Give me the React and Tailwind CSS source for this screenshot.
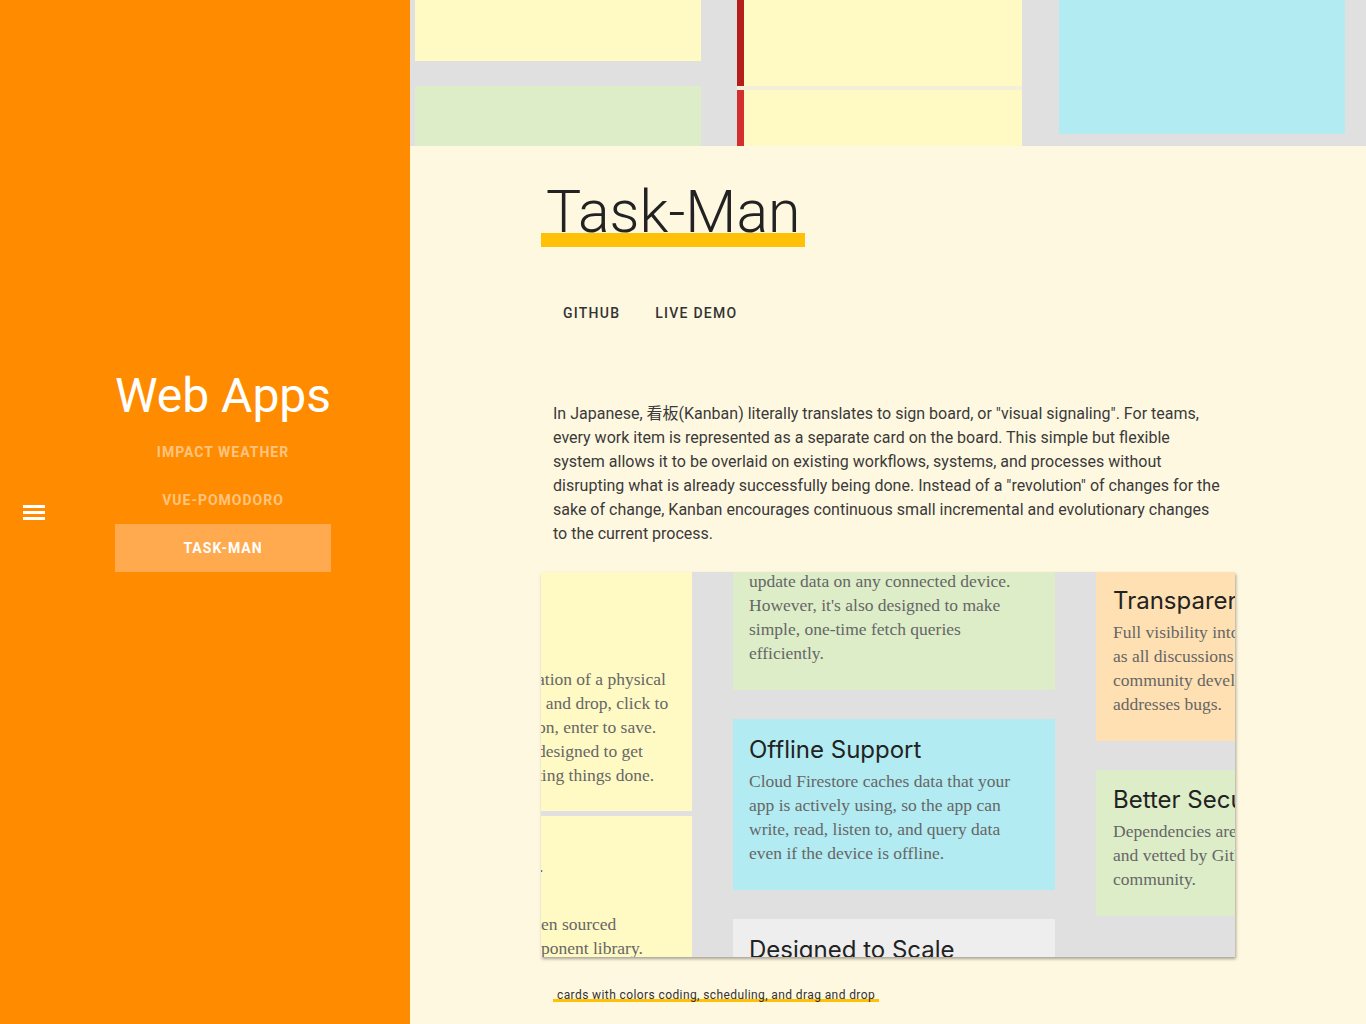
import React from "react";

const roboto = "font-['Roboto','Liberation_Sans',sans-serif]";
const serif = "font-['Liberation_Serif','DejaVu_Serif',serif]";
const franklin = "font-['Inter','Noto_Sans',sans-serif]";

function Sidebar() {
  const links = ["IMPACT WEATHER", "VUE-POMODORO", "TASK-MAN"];
  return (
    <aside className={`w-[410px] shrink-0 bg-[#ff8c00] flex ${roboto}`}>
      <div className="flex items-center pl-[23px] pb-[2px]">
        <button className="flex flex-col gap-[3px]">
          <span className="block h-[3px] w-[22px] bg-white" />
          <span className="block h-[3px] w-[22px] bg-white" />
          <span className="block h-[3px] w-[22px] bg-white" />
        </button>
      </div>
      <div className="flex-1 flex flex-col items-center pt-[367px] pr-[9px]">
        <h2 className="text-[48px] leading-[58px] text-white">Web Apps</h2>
        <nav className="mt-[3px] flex flex-col w-[216px]">
          {links.map((l) => (
            <a
              key={l}
              className={
                l === "TASK-MAN"
                  ? "h-[48px] flex items-center justify-center bg-[#ffaa4f] text-white text-[14px] font-bold tracking-[1px]"
                  : "h-[48px] flex items-center justify-center text-[#ffc47f] text-[14px] font-bold tracking-[1px]"
              }
            >
              {l}
            </a>
          ))}
        </nav>
      </div>
    </aside>
  );
}

// banner picture of the board at the top
function Banner() {
  return (
    <div className="h-[146px] bg-[#e0e0e0] flex pl-[5px] overflow-hidden">
      <div className="w-[286px] flex flex-col">
        <div className="h-[61px] shrink-0 bg-[#fff9c4]" />
        <div className="mt-[25px] flex-1 bg-[#dcedc8]" />
      </div>
      <div className="ml-[36px] w-[285px] flex flex-col">
        <div className="h-[86px] shrink-0 flex">
          <div className="w-[7px] bg-[#b71c1c]" />
          <div className="flex-1 bg-[#fff9c4]" />
        </div>
        <div className="h-[4px] shrink-0 bg-[#f3efd9]" />
        <div className="flex-1 flex">
          <div className="w-[7px] bg-[#d32f2f]" />
          <div className="flex-1 bg-[#fff9c4]" />
        </div>
      </div>
      <div className="ml-[37px] w-[286px]">
        <div className="h-[134px] bg-[#b2ebf2]" />
      </div>
    </div>
  );
}

function Lines({ lines, className = "" }) {
  return (
    <div className={`${serif} text-[17.5px] leading-[24px] text-[#666] ${className}`}>
      {lines.map((t, i) => (
        <div key={i} className="whitespace-pre">
          {t}
        </div>
      ))}
    </div>
  );
}

function Heading({ children }) {
  return (
    <h4 className={`${franklin} text-[24px] leading-[30px] text-[#222] whitespace-nowrap`}>
      {children}
    </h4>
  );
}

// screenshot of the app, drawn with blocks
function Shot() {
  return (
    <div className="mt-[26px] h-[385px] bg-[#e0e0e0] flex overflow-hidden shadow-[1px_2px_3px_rgba(0,0,0,0.35)]">
      <div className="w-[151px] shrink-0 flex flex-col overflow-hidden">
        <div className="h-[239px] shrink-0 bg-[#fff9c4] overflow-hidden pt-[95px]">
          <Lines
            className="-ml-[4px]"
            lines={[
              "ation of a physical",
              "  and drop, click to",
              "on, enter to save.",
              "designed to get",
              "ting things done.",
            ]}
          />
        </div>
        <div className="mt-[5px] flex-1 bg-[#fff9c4] overflow-hidden">
          <Lines className="-ml-[2px] pt-[38px]" lines={["."]} />
          <Lines className="pt-[34px]" lines={["en sourced", "ponent library."]} />
        </div>
      </div>
      <div className="ml-[41px] w-[322px] shrink-0 flex flex-col overflow-hidden">
        <div className="h-[118px] shrink-0 bg-[#dcedc8] overflow-hidden px-[16px]">
          <Lines
            className="-mt-[3px]"
            lines={[
              "update data on any connected device.",
              "However, it's also designed to make",
              "simple, one-time fetch queries",
              "efficiently.",
            ]}
          />
        </div>
        <div className="mt-[29px] h-[171px] shrink-0 bg-[#b2ebf2] px-[16px] pt-[16px]">
          <Heading>Offline Support</Heading>
          <Lines
            className="mt-[4px]"
            lines={[
              "Cloud Firestore caches data that your",
              "app is actively using, so the app can",
              "write, read, listen to, and query data",
              "even if the device is offline.",
            ]}
          />
        </div>
        <div className="mt-[29px] h-[80px] shrink-0 bg-[#eeeeee] px-[16px] pt-[16px]">
          <Heading>Designed to Scale</Heading>
        </div>
      </div>
      <div className="ml-[41px] w-[322px] shrink-0 flex flex-col">
        <div className="h-[169px] shrink-0 bg-[#ffe0b2] px-[17px] pt-[14px]">
          <Heading>Transparency</Heading>
          <Lines
            className="mt-[4px]"
            lines={[
              "Full visibility into the project",
              "as all discussions happen in the",
              "community developing and",
              "addresses bugs.",
            ]}
          />
        </div>
        <div className="mt-[29px] h-[146px] shrink-0 bg-[#dcedc8] px-[17px] pt-[15px]">
          <Heading>Better Security</Heading>
          <Lines
            className="mt-[4px]"
            lines={["Dependencies are reviewed", "and vetted by GitHub", "community."]}
          />
        </div>
      </div>
    </div>
  );
}

const intro = [
  'In Japanese, 看板(Kanban) literally translates to sign board, or "visual signaling". For teams,',
  "every work item is represented as a separate card on the board. This simple but flexible",
  "system allows it to be overlaid on existing workflows, systems, and processes without",
  'disrupting what is already successfully being done. Instead of a "revolution" of changes for the',
  "sake of change, Kanban encourages continuous small incremental and evolutionary changes",
  "to the current process.",
];

export default function App() {
  return (
    <div className="flex min-h-screen">
      <Sidebar />
      <main className={`flex-1 bg-[#fff8e1] ${roboto}`}>
        <Banner />
        <div className="w-[694px] mx-auto pb-[20px]">
          <h1 className="mt-[30px]">
            <span className="inline-block px-[5px] text-[59px] leading-[71px] font-light text-[#222] bg-[linear-gradient(to_top,#ffc107_14px,transparent_14px)]">
              Task-Man
            </span>
          </h1>
          <div className="mt-[48px] ml-[6px] flex gap-[3px]">
            <a className="h-[36px] px-[16px] flex items-center text-[14px] font-medium tracking-[1.25px] text-[#333]">
              GITHUB
            </a>
            <a className="h-[36px] px-[16px] flex items-center text-[14px] font-medium tracking-[1.25px] text-[#333]">
              LIVE DEMO
            </a>
          </div>
          <p className="mt-[71px] pl-[12px] text-[16px] leading-[24px] text-[#3a3a3a] font-['Roboto','Noto_Sans_CJK_JP',sans-serif]">
            {intro.map((t, i) => (
              <span key={i} className="block whitespace-nowrap">
                {t}
              </span>
            ))}
          </p>
          <Shot />
          <div className="mt-[25px] pl-[12px]">
            <span className="inline-block px-[4px] text-[12px] leading-[14px] tracking-[0.4px] text-[#333] bg-[linear-gradient(to_top,#ffc107_3px,transparent_3px)]">
              cards with colors coding, scheduling, and drag and drop
            </span>
          </div>
        </div>
      </main>
    </div>
  );
}
